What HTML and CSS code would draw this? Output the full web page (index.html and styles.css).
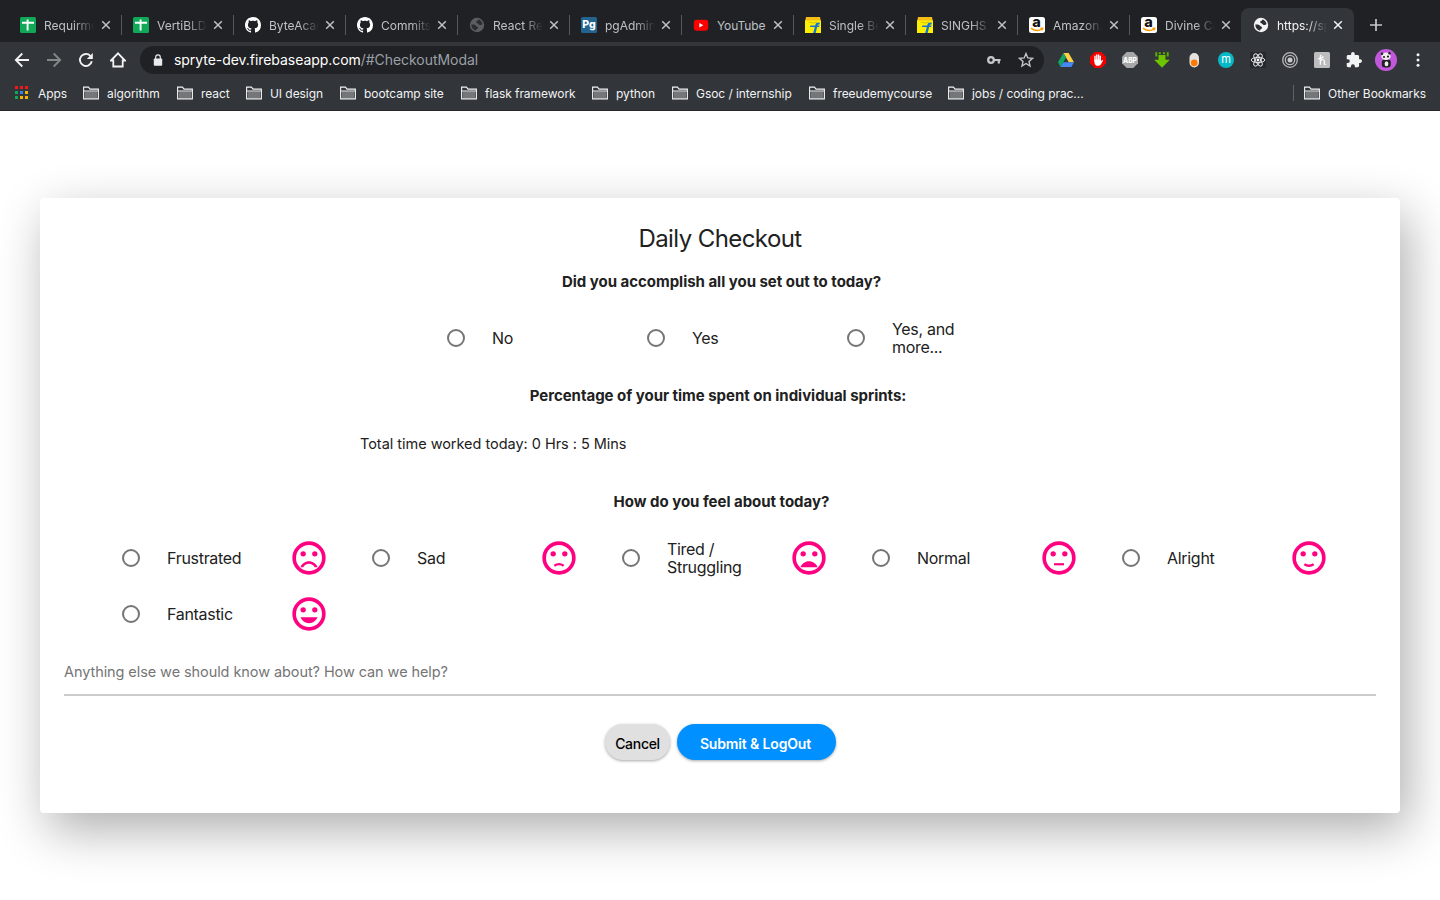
FILE: index.html
```html
<!DOCTYPE html>
<html lang="en">
<head>
<meta charset="utf-8">
<title>Daily Checkout</title>
<link rel="stylesheet" href="styles.css">
</head>
<body>
<svg class="defs" width="0" height="0">
  <symbol id="x" viewBox="0 0 10 10"><path d="M1.2 1.2l7.6 7.6M8.8 1.2L1.2 8.8" stroke="currentColor" stroke-width="1.5"/></symbol>
  <symbol id="sheet" viewBox="0 0 16 16"><rect width="16" height="16" rx="1.5" fill="#0fa958"/><path d="M2 5.8h12M7.6 2.5v11" stroke="#fff" stroke-width="1.9"/></symbol>
  <symbol id="github" viewBox="0 0 16 16"><path fill="#fff" d="M8 0C3.58 0 0 3.58 0 8c0 3.54 2.29 6.53 5.47 7.59.4.07.55-.17.55-.38 0-.19-.01-.82-.01-1.49-2.01.37-2.53-.49-2.69-.94-.09-.23-.48-.94-.82-1.13-.28-.15-.68-.52-.01-.53.63-.01 1.08.58 1.23.82.72 1.21 1.87.87 2.33.66.07-.52.28-.87.51-1.07-1.78-.2-3.64-.89-3.64-3.95 0-.87.31-1.59.82-2.15-.08-.2-.36-1.02.08-2.12 0 0 .67-.21 2.2.82.64-.18 1.32-.27 2-.27s1.36.09 2 .27c1.53-1.04 2.2-.82 2.2-.82.44 1.1.16 1.92.08 2.12.51.56.82 1.27.82 2.15 0 3.07-1.87 3.75-3.65 3.95.29.25.54.73.54 1.48 0 1.07-.01 1.93-.01 2.2 0 .21.15.46.55.38A8.01 8.01 0 0 0 16 8c0-4.42-3.58-8-8-8z"/></symbol>
  <symbol id="globe" viewBox="0 0 16 16"><circle cx="8" cy="8" r="7.2" fill="currentColor"/><path class="land" d="M2.3 7.6C4 7.4 6.4 7.6 7 8.800c.5 1.100 2.300.6 2.100 1.900-.2 1.300-1.900 1-2.100 3-3-.6-4.700-3-4.700-6.100zM9.500 2.600c-.4 1.600-2.500 1.200-2.300 2.600.1 1 1.900.8 2.300 1.800.5 1.200 2.600 1.300 4 .3-.3-2.300-1.900-4.200-4-4.700z"/></symbol>
  <symbol id="flip" viewBox="0 0 16 16"><path d="M1 0h14l1 5H0z" fill="#f5bd18"/><path d="M0 3.500h16V16H0z" fill="#ffef00"/><path d="M4 5q4 2 8 0" stroke="#d5c000" fill="none"/><path d="M14.800 5.700c-3.200-.6-4.200.8-4.600 2.900H5.500l-.7 1.500h5L8.200 16h2.500l1.400-5.900h2l.4-1.500h-2c.2-1 .8-1.300 2-1.100z" fill="#1673d6"/></symbol>
  <symbol id="amazon" viewBox="0 0 16 16"><rect width="16" height="16" rx="2.500" fill="#fff"/><text x="7.500" y="9.800" text-anchor="middle" font-size="14.500" font-weight="800" fill="#111">a</text><path d="M2 11.200q6 4.300 11 .8M11.500 11.300h2.200l-.5 2" fill="none" stroke="#f90" stroke-width="1.500"/></symbol>
  <symbol id="folder" viewBox="0 0 16 14"><path d="M.6 12.900V1.100h4.900l1.500 2h8.400v9.800z" fill="none" stroke="#f1f3f4" stroke-width="1.100"/><path d="M1.700 5.500h12.600v6.500H1.700z" fill="#74777a"/><path d="M1 5h14" stroke="#f1f3f4"/></symbol>
  <symbol id="face" viewBox="0 0 24 24"><circle cx="12" cy="12" r="8.900" fill="none" stroke="currentColor" stroke-width="2.200"/><circle cx="8.500" cy="9.500" r="1.600" fill="currentColor"/><circle cx="15.500" cy="9.500" r="1.600" fill="currentColor"/></symbol>
</svg>

<header class="browser">
  <nav class="tabs">
    <div class="tab first"><svg class="fav"><use href="#sheet"/></svg><span>Requirme</span><svg class="close"><use href="#x"/></svg></div>
    <div class="tab"><svg class="fav"><use href="#sheet"/></svg><span>VertiBLD</span><svg class="close"><use href="#x"/></svg></div>
    <div class="tab"><svg class="fav"><use href="#github"/></svg><span>ByteAcad</span><svg class="close"><use href="#x"/></svg></div>
    <div class="tab"><svg class="fav"><use href="#github"/></svg><span>Commits</span><svg class="close"><use href="#x"/></svg></div>
    <div class="tab"><svg class="fav dim"><use href="#globe"/></svg><span>React Re</span><svg class="close"><use href="#x"/></svg></div>
    <div class="tab"><svg class="fav" viewBox="0 0 16 16"><rect width="16" height="16" rx="1.500" fill="#23638f"/><text x="8" y="11.300" text-anchor="middle" font-size="10.500" font-weight="800" fill="#fff">Pg</text></svg><span>pgAdmin</span><svg class="close"><use href="#x"/></svg></div>
    <div class="tab full"><svg class="fav" viewBox="0 0 16 16"><rect x=".8" y="2.800" width="14.400" height="11" rx="3" fill="#f00"/><path d="M6.300 6.100v4.400L10.300 8.300z" fill="#fff"/></svg><span>YouTube</span><svg class="close"><use href="#x"/></svg></div>
    <div class="tab"><svg class="fav"><use href="#flip"/></svg><span>Single Be</span><svg class="close"><use href="#x"/></svg></div>
    <div class="tab"><svg class="fav"><use href="#flip"/></svg><span>SINGHS</span><svg class="close"><use href="#x"/></svg></div>
    <div class="tab"><svg class="fav"><use href="#amazon"/></svg><span>Amazon.</span><svg class="close"><use href="#x"/></svg></div>
    <div class="tab last"><svg class="fav"><use href="#amazon"/></svg><span>Divine Ca</span><svg class="close"><use href="#x"/></svg></div>
    <div class="tab active"><svg class="fav"><use href="#globe"/></svg><span>https://sp</span><svg class="close"><use href="#x"/></svg></div>
    <svg class="newtab" viewBox="0 0 12 12"><path d="M6 0v12M0 6h12" stroke="#c4c7ca" stroke-width="1.700"/></svg>
  </nav>

  <div class="toolbar">
    <div class="navs">
      <svg viewBox="0 0 16 16"><path d="M15 8H2M8.300 1.500L1.800 8l6.500 6.500" fill="none" stroke="#f1f3f4" stroke-width="1.800"/></svg>
      <svg viewBox="0 0 16 16"><path d="M1 8h13M7.700 1.500L14.200 8l-6.500 6.500" fill="none" stroke="#85888b" stroke-width="1.800"/></svg>
      <svg viewBox="0 0 16 16"><path d="M13.800 9.300A6 6 0 1 1 12.500 4" fill="none" stroke="#f1f3f4" stroke-width="1.900"/><path d="M14.800 1v6H8.800z" fill="#f1f3f4"/></svg>
      <svg viewBox="0 0 16 16"><path d="M1 8.500L8 1.300l7 7.200h-2.300v6H3.300v-6z" fill="none" stroke="#f1f3f4" stroke-width="1.800"/></svg>
    </div>
    <div class="omnibox">
      <svg class="lock" viewBox="0 0 10 12"><rect x=".8" y="4.500" width="8.400" height="7.200" rx=".8" fill="#e8eaed"/><path d="M2.700 5V3.200a2.300 2.300 0 0 1 4.600 0V5" fill="none" stroke="#e8eaed" stroke-width="1.200"/></svg>
      <span class="url">spryte-dev.firebaseapp.com<i>/#CheckoutModal</i></span>
      <svg class="key" viewBox="0 0 14 10"><circle cx="4" cy="5" r="2.800" fill="none" stroke="#c4c7ca" stroke-width="2.300"/><path d="M7 5h6.500M11.800 5v3.500" stroke="#c4c7ca" stroke-width="2.200"/></svg>
      <svg class="star" viewBox="0 0 16 16"><path d="M8 1.600l1.800 4.300 4.700.4-3.500 3.100 1 4.600L8 11.500 4 14l1-4.600-3.500-3.100 4.700-.4z" fill="none" stroke="#c4c7ca" stroke-width="1.400"/></svg>
    </div>
    <div class="exts">
      <svg viewBox="0 0 16 16"><path d="M5.400 1h5.200l5.400 9.300h-5.200z" fill="#ffcf48"/><path d="M5.400 1L0 10.300 2.600 15 8 5.600z" fill="#11a861"/><path d="M5.300 10.300H16L13.400 15H2.600z" fill="#4688f4"/></svg>
      <svg viewBox="0 0 16 16"><path d="M4.700 0h6.600L16 4.700v6.600L11.300 16H4.700L0 11.300V4.700z" fill="#f40000"/><path d="M5 9.500V4.200M6.800 8V2.900M8.600 8V2.900M10.300 9V4.300" stroke="#fff" stroke-width="1.400" stroke-linecap="round"/><path d="M4.300 7.500h6.700v1.700l1.300-1.400.8.700-2.300 4-1.600 1.300H6.300l-1.600-1.800z" fill="#fff"/></svg>
      <svg viewBox="0 0 16 16"><path d="M4.700 0h6.600L16 4.700v6.600L11.300 16H4.700L0 11.300V4.700z" fill="#a7a7a7"/><text x="1" y="10.700" font-size="7.500" font-weight="800" fill="#fff" textLength="14" lengthAdjust="spacingAndGlyphs">ABP</text></svg>
      <svg viewBox="0 0 16 16"><path d="M4.500 3h7v4.800h4.300L8 15.800.2 7.800h4.300z" fill="#6fc400"/><path d="M1.300.3h2v4.200h-2zM4.800.3h2v2h-2zM9 .3h2v2H9zM12.700.3h2v4.200h-2z" fill="#5ab000"/></svg>
      <svg viewBox="0 0 16 16"><rect x="3.500" y="1" width="9.500" height="14.500" rx="4.700" fill="#e6e1dd"/><circle cx="8.200" cy="10.800" r="3.400" fill="#ff7a00"/></svg>
      <svg viewBox="0 0 16 16"><circle cx="8" cy="8" r="8" fill="#08b8c4"/><text x="8" y="11" text-anchor="middle" font-size="11" fill="#fff">m</text></svg>
      <svg viewBox="0 0 16 16"><rect width="16" height="16" rx="2" fill="#25282c"/><g fill="none" stroke="#e2e4e6" stroke-width="1"><ellipse cx="8" cy="8" rx="6.800" ry="2.600"/><ellipse cx="8" cy="8" rx="6.800" ry="2.600" transform="rotate(60 8 8)"/><ellipse cx="8" cy="8" rx="6.800" ry="2.600" transform="rotate(120 8 8)"/></g><circle cx="8" cy="8" r="1.400" fill="#fff"/></svg>
      <svg viewBox="0 0 16 16"><g fill="none" stroke="#b9bbbd" stroke-width="1.300"><circle cx="8" cy="8" r="7.300"/><circle cx="8" cy="8" r="4.700"/></g><circle cx="8" cy="8" r="2.500" fill="#c8cacc"/></svg>
      <svg viewBox="0 0 16 16"><rect width="16" height="16" rx="1.500" fill="#bdbdbd"/><path d="M6.300 12.700V4.500q0-1.400 1.200-1.200M6.300 9.500c.8-2.500 4-2.700 4-.3v2q0 1.600 1.400 1M4 6.800q3.500 0 5.500-2.300" fill="none" stroke="#fff" stroke-width="1.200"/></svg>
      <svg viewBox="1 1 22 22"><path d="M20.500 11H19V7c0-1.100-.9-2-2-2h-4V3.500a2.500 2.500 0 0 0-5 0V5H4c-1.100 0-2 .9-2 2v3.800h1.500a2.700 2.700 0 0 1 0 5.400H2V20c0 1.100.9 2 2 2h3.800v-1.500a2.700 2.700 0 0 1 5.400 0V22H17c1.100 0 2-.9 2-2v-4h1.500a2.500 2.500 0 0 0 0-5z" fill="#f1f3f4"/></svg>
      <svg class="avatar" viewBox="0 0 22 22"><circle cx="11" cy="11" r="11" fill="#c158dc"/><rect x="6.800" y="10.500" width="9" height="8" rx="3" fill="#222"/><ellipse cx="11.500" cy="14.800" rx="1.900" ry="2.500" fill="#eee"/><ellipse cx="11" cy="7.300" rx="4.600" ry="3.700" fill="#eee"/><circle cx="7" cy="4.700" r="1.200" fill="#222"/><circle cx="14.500" cy="4.200" r="1.200" fill="#222"/><circle cx="9" cy="8" r="1.100" fill="#222"/><circle cx="13" cy="7.600" r="1.100" fill="#222"/></svg>
      <svg viewBox="0 0 16 16"><g fill="#f1f3f4"><circle cx="8" cy="2.800" r="1.500"/><circle cx="8" cy="8" r="1.500"/><circle cx="8" cy="13.200" r="1.500"/></g></svg>
    </div>
  </div>

  <div class="bookmarks">
    <div class="bm w-apps"><svg class="apps" viewBox="0 0 14 14"><path d="M0 0h3v3H0zM5 0h3v3H5zM10 0h3v3h-3z" fill="#f01818"/><path d="M0 5h3v3H0z" fill="#0fa958"/><path d="M5 5h3v3H5z" fill="#2a86f4"/><path d="M10 5h3v3h-3z" fill="#f5b400"/><path d="M0 10h3v3H0z" fill="#0fa958"/><path d="M5 10h3v3H5zM10 10h3v3h-3z" fill="#f5b400"/></svg>Apps</div>
    <div class="bm w94"><svg><use href="#folder"/></svg>algorithm</div>
    <div class="bm w69"><svg><use href="#folder"/></svg>react</div>
    <div class="bm w94"><svg><use href="#folder"/></svg>UI design</div>
    <div class="bm w121"><svg><use href="#folder"/></svg>bootcamp site</div>
    <div class="bm w131"><svg><use href="#folder"/></svg>flask framework</div>
    <div class="bm w80"><svg><use href="#folder"/></svg>python</div>
    <div class="bm w137"><svg><use href="#folder"/></svg>Gsoc / internship</div>
    <div class="bm w139"><svg><use href="#folder"/></svg>freeudemycourse</div>
    <div class="bm"><svg><use href="#folder"/></svg>jobs / coding prac...</div>
    <div class="bm other"><svg><use href="#folder"/></svg>Other Bookmarks</div>
  </div>
</header>

<main class="card">
  <h1>Daily Checkout</h1>
  <h2 class="q1">Did you accomplish all you set out to today?</h2>
  <div class="answers">
    <label class="opt"><b class="radio"></b><span>No</span></label>
    <label class="opt"><b class="radio"></b><span>Yes</span></label>
    <label class="opt"><b class="radio"></b><span>Yes, and more...</span></label>
  </div>
  <h2 class="q2">Percentage of your time spent on individual sprints:</h2>
  <p class="total">Total time worked today: 0 Hrs : 5 Mins</p>
  <h2 class="q3">How do you feel about today?</h2>
  <div class="moods">
    <label class="opt"><b class="radio"></b><span>Frustrated</span><svg class="mood" viewBox="0 0 24 24"><use href="#face"/><path d="M12 14c-2.330 0-4.320 1.450-5.120 3.500h1.670c.690-1.190 1.970-2 3.450-2s2.750.810 3.450 2h1.670c-.8-2.050-2.790-3.500-5.120-3.500z"/></svg></label>
    <label class="opt"><b class="radio"></b><span>Sad</span><svg class="mood" viewBox="0 0 24 24"><use href="#face"/><path d="M9.200 16.600q2.800-1.900 5.600 0" class="line"/></svg></label>
    <label class="opt"><b class="radio"></b><span>Tired / Struggling</span><svg class="mood" viewBox="0 0 24 24"><use href="#face"/><path d="M12 14c-2.330 0-4.310 1.460-5.110 3.500h10.220c-.8-2.040-2.780-3.500-5.110-3.500z"/></svg></label>
    <label class="opt"><b class="radio"></b><span>Normal</span><svg class="mood" viewBox="0 0 24 24"><use href="#face"/><path d="M9 15.100h6v1.300H9z"/></svg></label>
    <label class="opt"><b class="radio"></b><span>Alright</span><svg class="mood" viewBox="0 0 24 24"><use href="#face"/><path d="M9.200 15.700q2.800 1.900 5.600 0" class="line"/></svg></label>
    <label class="opt"><b class="radio"></b><span>Fantastic</span><svg class="mood" viewBox="0 0 24 24"><use href="#face"/><path d="M12 17.500c2.330 0 4.310-1.460 5.110-3.500H6.890c.8 2.040 2.780 3.500 5.110 3.500z"/></svg></label>
  </div>
  <div class="field"><span>Anything else we should know about? How can we help?</span></div>
  <div class="actions">
    <button class="cancel"><span>Cancel</span></button>
    <button class="submit"><span>Submit &amp; LogOut</span></button>
  </div>
</main>
</body>
</html>
```

FILE: styles.css
```css
* { box-sizing: border-box; }
body { margin: 0; height: 900px; overflow: hidden; background: #fff; font-family: Inter, "Liberation Sans", sans-serif; color: #212121; }
svg { display: block; flex: none; }
.defs { display: none; }

.browser { height: 111px; background: #202124; color: #f1f3f4; }
.tabs { height: 42px; padding: 8px 0 0 10px; display: flex; }
.tab { width: 112px; height: 34px; padding: 0 0 0 11px; display: flex; align-items: center; color: #bdc1c6; font-size: 12px; position: relative; flex: none; }
.tab::after { content: ""; position: absolute; right: 0; top: 7px; width: 1px; height: 20px; background: #55585c; }
.tab.last::after, .tab.active::after { display: none; }
.tab span { width: 50px; margin: 0 6px 0 8px; overflow: hidden; white-space: nowrap; -webkit-mask-image: linear-gradient(90deg, #000 30px, transparent 50px); mask-image: linear-gradient(90deg, #000 30px, transparent 50px); }
.tab.first { padding-left: 10px; }
.tab.first span { margin-right: 7px; }
.tab.full span { -webkit-mask-image: none; mask-image: none; letter-spacing: -.1px; }
.fav { width: 16px; height: 16px; }
.fav.dim { color: #5a5d61; }
.land { fill: #2b2d30; }
.close { width: 10px; height: 10px; }
.tab.active { width: 113px; margin-left: -1px; padding-left: 12px; background: #323539; border-radius: 8px 8px 0 0; color: #f1f3f4; }
.newtab { width: 12px; height: 12px; margin: 11px 0 0 16px; }

.toolbar { height: 36px; background: #323539; display: flex; align-items: center; }
.navs { width: 140px; padding-left: 14px; display: flex; gap: 16px; }
.navs svg { width: 16px; height: 16px; }
.omnibox { width: 904px; height: 28px; border-radius: 14px; background: #202124; display: flex; align-items: center; padding: 0 10px 0 13px; }
.lock { width: 10px; height: 12px; margin-right: 11px; }
.url { flex: 1; font-size: 14px; line-height: 18px; padding-bottom: 1px; letter-spacing: -.05px; color: #fff; }
.url i { font-style: normal; color: #9aa0a6; }
.key { width: 14px; height: 10px; margin-right: 17px; }
.star { width: 16px; height: 16px; }
.exts { display: flex; align-items: center; gap: 16px; padding-left: 14px; }
.exts svg { width: 16px; height: 16px; }
.exts .avatar { width: 22px; height: 22px; margin: 0 -3px; }

.bookmarks { height: 33px; background: #323539; border-bottom: 1px solid #25272a; display: flex; align-items: center; padding: 0 14px 2px 15px; font-size: 12px; letter-spacing: -.06px; }
.bm { display: flex; align-items: center; gap: 8px; white-space: nowrap; flex: none; }
.bm svg { width: 16px; height: 14px; }
.bm .apps { width: 14px; height: 14px; margin-right: 1px; }
.w-apps { width: 68px; }
.w69 { width: 69px; }
.w80 { width: 80px; }
.w94 { width: 94px; }
.w121 { width: 121px; }
.w131 { width: 131px; }
.w137 { width: 137px; }
.w139 { width: 139px; }
.other { margin-left: auto; border-left: 1px solid #5f6368; padding-left: 10px; height: 16px; }

.card { width: 1360px; height: 615px; margin: 87px 40px 0; padding: 25px 24px 24px; border-radius: 4px; background: #fff; box-shadow: 8px 17px 50px rgba(0, 0, 0, .32); display: flex; flex-direction: column; }
h1 { margin: 0; height: 32px; line-height: 32px; font-size: 24px; font-weight: 400; text-align: center; letter-spacing: -.58px; }
h2 { margin: 0; height: 20px; line-height: 20px; font-size: 15px; font-weight: 700; text-align: center; letter-spacing: -.02px; }
.q1 { margin-top: 17px; padding-left: 3px; }
.answers { margin: 18px 0 0 383px; display: flex; height: 56px; }
.answers .opt { width: 200px; }
.q2 { margin-top: 20px; padding-right: 4px; }
.total { margin: 28px 0 0 296px; height: 20px; line-height: 20px; font-size: 14.500px; letter-spacing: -.03px; }
.q3 { margin-top: 38px; padding-left: 3px; }
.moods { margin: 18px 0 0 58px; display: grid; grid-template-columns: repeat(5, 250px); grid-auto-rows: 56px; }
.opt { display: flex; align-items: center; font-size: 16px; line-height: 18px; letter-spacing: -.3px; }
.radio { width: 18px; height: 18px; border: 2px solid #757575; border-radius: 50%; flex: none; }
.answers .radio { margin-right: 27px; }
.answers span { width: 75px; }
.moods .radio { margin-right: 27px; }
.moods span { width: 122px; padding-right: 20px; }
.mood { width: 40px; height: 40px; color: #ff0080; fill: #ff0080; overflow: visible; }
.mood .line { fill: none; stroke: #ff0080; stroke-width: 1.400; }
.field { height: 54px; border-bottom: 2px solid #ccc; color: #757575; font-size: 14.500px; letter-spacing: -.08px; line-height: 20px; padding-top: 20px; }
.actions { margin-top: 28px; display: flex; gap: 7px; padding-left: 541px; }
button { height: 36px; padding: 2px 0 0; border: 0; border-radius: 18px; font: 600 14px Inter, sans-serif; letter-spacing: -.15px; white-space: nowrap; box-shadow: 0 1px 3px rgba(0, 0, 0, .35); }
.cancel { width: 65px; background: #e0e0e0; color: #000; font-weight: 500; letter-spacing: -.3px; }
.submit { width: 159px; background: #0090ff; color: #fff; padding-right: 2px; }
```
